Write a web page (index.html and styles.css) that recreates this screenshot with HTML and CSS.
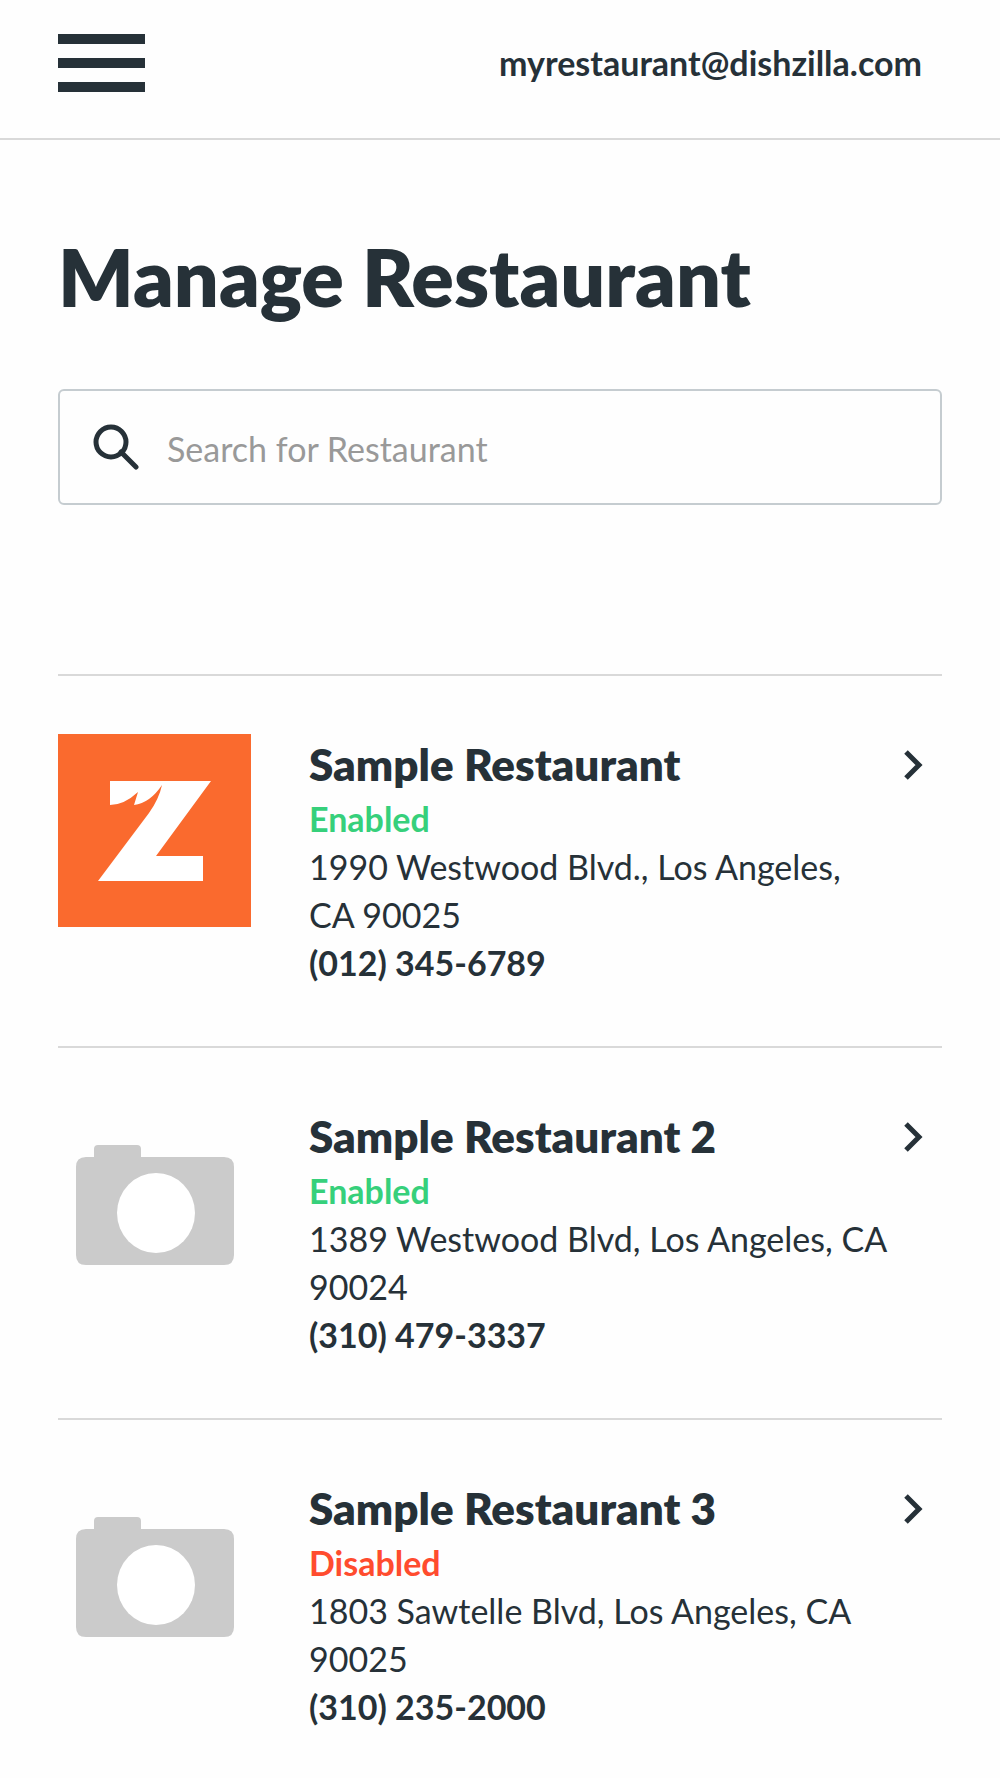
FILE: index.html
```html
<!DOCTYPE html>
<html lang="en">
<head>
  <meta charset="UTF-8" />
  <meta name="viewport" content="width=device-width, initial-scale=1" />
  <title>Manage Restaurant - Dishzilla</title>
  <link rel="stylesheet" href="styles.css">
</head>
<body>
  <!-- Top bar -->
  <header class="header">
    <button class="menu-btn" type="button" aria-label="Open menu">
      <span class="menu-line"></span>
      <span class="menu-line"></span>
      <span class="menu-line"></span>
    </button>
    <a class="account" href="#account">myrestaurant@dishzilla.com</a>
  </header>

  <main class="container">
    <h1>Manage Restaurant</h1>

    <form class="search" role="search">
      <label for="search" aria-label="Search for Restaurant">
        <svg class="search-icon" viewBox="0 0 46 46" aria-hidden="true">
          <circle cx="18" cy="18" r="15" />
          <path d="M28 28L43 43" />
        </svg>
      </label>
      <input id="search" type="text" placeholder="Search for Restaurant" />
    </form>

    <!-- Restaurant list -->
    <ul class="restaurants">
      <li>
        <a class="restaurant" href="#restaurant-1">
          <svg class="thumb" viewBox="0 0 193 193" aria-hidden="true">
            <rect width="193" height="193" fill="#fa6a2e" />
            <path fill="#fff" d="M52 47H153L98 122H145V147H40L91 79Q101 65 104 51Q92 69 76 71L80 58Q66 71 52 71Z" />
          </svg>
          <div class="info">
            <h2>Sample Restaurant</h2>
            <p class="status enabled">Enabled</p>
            <p>1990 Westwood Blvd., Los Angeles, CA 90025</p>
            <p class="phone">(012) 345-6789</p>
          </div>
          <svg class="chevron" viewBox="0 0 20 30" aria-hidden="true"><path d="M2 2L15 15L2 28" /></svg>
        </a>
      </li>
      <li>
        <a class="restaurant" href="#restaurant-2">
          <svg class="thumb" viewBox="0 0 193 193" aria-hidden="true">
            <path fill="#cbcbcb" d="M36 48V43Q36 39 40 39H79Q83 39 83 43V51H166Q176 51 176 61V149Q176 159 166 159H28Q18 159 18 149V61Q18 51 28 51H36Z" />
            <ellipse cx="98" cy="107" rx="39" ry="40" fill="#fff" />
          </svg>
          <div class="info">
            <h2>Sample Restaurant 2</h2>
            <p class="status enabled">Enabled</p>
            <p>1389 Westwood Blvd, Los Angeles, CA 90024</p>
            <p class="phone">(310) 479-3337</p>
          </div>
          <svg class="chevron" viewBox="0 0 20 30" aria-hidden="true"><path d="M2 2L15 15L2 28" /></svg>
        </a>
      </li>
      <li>
        <a class="restaurant" href="#restaurant-3">
          <svg class="thumb" viewBox="0 0 193 193" aria-hidden="true">
            <path fill="#cbcbcb" d="M36 48V43Q36 39 40 39H79Q83 39 83 43V51H166Q176 51 176 61V149Q176 159 166 159H28Q18 159 18 149V61Q18 51 28 51H36Z" />
            <ellipse cx="98" cy="107" rx="39" ry="40" fill="#fff" />
          </svg>
          <div class="info">
            <h2>Sample Restaurant 3</h2>
            <p class="status disabled">Disabled</p>
            <p>1803 Sawtelle Blvd, Los Angeles, CA 90025</p>
            <p class="phone">(310) 235-2000</p>
          </div>
          <svg class="chevron" viewBox="0 0 20 30" aria-hidden="true"><path d="M2 2L15 15L2 28" /></svg>
        </a>
      </li>
    </ul>
  </main>
</body>
</html>
```
FILE: styles.css
```css
* {
  box-sizing: border-box;
}
body {
  font-family: Lato, sans-serif;
  font-size: 34px;
  line-height: 48px;
  color: #263138;
  margin: 0;
  background: #fefefe;
}
h1, h2, p, ul {
  margin: 0;
  padding: 0;
}
a {
  color: inherit;
  text-decoration: none;
}
.header {
  display: flex;
  justify-content: space-between;
  align-items: center;
  padding: 34px 78px 46px 58px;
  border-bottom: 2px solid #d9d9d9;
}
.menu-btn {
  display: flex;
  flex-direction: column;
  justify-content: space-between;
  width: 87px;
  height: 58px;
  padding: 0;
  border: none;
  background: none;
  cursor: pointer;
}
.menu-line {
  width: 100%;
  height: 10px;
  background: #263138;
}
.account {
  font-weight: 700;
}
.container {
  padding: 89px 58px 0;
}
h1 {
  font-size: 79px;
  line-height: 96px;
  font-weight: 800;
}
.search {
  display: flex;
  align-items: center;
  gap: 28px;
  height: 116px;
  margin: 64px 0 169px;
  padding: 0 33px;
  border: 2px solid #c5ccd0;
  border-radius: 6px;
}
.search label {
  display: flex;
}
.search-icon {
  width: 46px;
  height: 46px;
  fill: none;
  stroke: #263138;
  stroke-width: 5;
  stroke-linecap: round;
}
.search input {
  flex: 1;
  min-width: 0;
  padding: 4px 0 0;
  border: none;
  outline: none;
  background: none;
  font: inherit;
  color: inherit;
}
.search input::placeholder {
  color: #999;
  opacity: 1;
}
.restaurants {
  list-style: none;
}
.restaurant {
  display: flex;
  align-items: flex-start;
  padding: 58px 18px 59px 0;
  border-top: 2px solid #d9d9d9;
}
.thumb {
  flex: none;
  width: 193px;
  height: 193px;
  margin-right: 58px;
}
.info {
  flex: 1;
}
h2 {
  font-size: 44px;
  line-height: 61px;
  font-weight: 800;
}
.status {
  font-weight: 700;
}
.enabled { color: #36d07b; }
.disabled { color: #ff4c2e; }
.phone {
  font-weight: 700;
}
.chevron {
  flex: none;
  width: 20px;
  height: 30px;
  margin: 16px 0 0 15px;
  fill: none;
  stroke: #263138;
  stroke-width: 5;
}
```
